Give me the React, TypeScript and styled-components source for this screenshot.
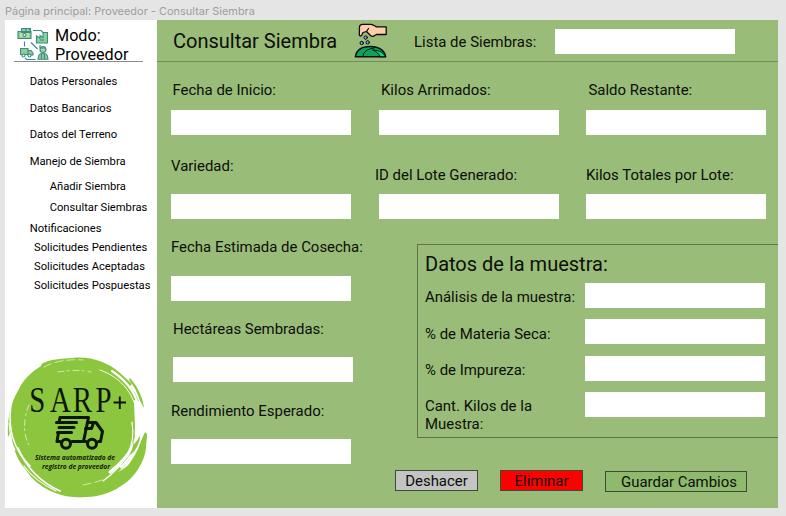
import React from "react";
import styled, { createGlobalStyle } from "styled-components";

const GlobalStyle = createGlobalStyle`
  * { box-sizing: border-box; }
  body {
    margin: 0;
    background: #e5e5e5;
    font-family: Roboto, "Liberation Sans", sans-serif;
    color: #0b0f08;
    overflow: hidden;
  }
`;

const Canvas = styled.div`
  width: 786px;
  height: 516px;
  display: flex;
  flex-direction: column;
  background: #e5e5e5;
`;

const FrameName = styled.div`
  height: 20px;
  padding: 4px 0 0 5px;
  font: 400 10.9px/14px Inter, sans-serif;
  letter-spacing: 0.04px;
  color: #9d9d9d;
  white-space: nowrap;
`;

const Board = styled.div`
  display: flex;
  width: 773px;
  height: 488px;
  margin-left: 5px;
`;

const Sidebar = styled.aside`
  width: 152px;
  height: 100%;
  display: flex;
  flex-direction: column;
  background: #fff;
`;

const Profile = styled.div`
  display: flex;
  height: 42px;
  width: 129px;
  margin-left: 9px;
  padding: 6px 0 0 3px;
  border-bottom: 1px solid #8c8c8c;
`;

const Mode = styled.div`
  margin-left: 5px;
  font-size: 16.2px;
  line-height: 19px;
  color: #000;
  white-space: nowrap;
`;

const NavItem = styled.a<{ $indent?: number; $height: number }>`
  height: ${(p) => p.$height}px;
  padding-left: ${(p) => 24.7 + (p.$indent ?? 0)}px;
  font-size: 11.2px;
  line-height: 14px;
  color: #000;
  white-space: nowrap;
`;

const Nav = styled.nav`
  display: flex;
  flex-direction: column;
  padding-top: 13px;
  flex: 1;
`;

const Logo = styled.svg`
  display: block;
  flex: none;
`;

const Main = styled.main`
  flex: 1;
  display: flex;
  flex-direction: column;
  background: #9abc79;
`;

const Header = styled.header`
  display: flex;
  height: 42px;
  border-bottom: 1px solid #708c58;
`;

const Title = styled.h1`
  width: 197px;
  margin: 0;
  padding: 9px 0 0 16px;
  font-size: 20px;
  font-weight: 400;
  line-height: 24px;
  white-space: nowrap;
`;

const HeaderLabel = styled.label`
  width: 141px;
  margin-left: 27px;
  padding-top: 13px;
  font-size: 14.95px;
  line-height: 18px;
  white-space: nowrap;
`;

const Input = styled.input`
  display: block;
  width: 180px;
  height: 25px;
  padding: 0 6px;
  border: 0;
  border-radius: 0;
  outline: 0;
  background: #fff;
`;

const HeaderInput = styled(Input)`
  margin-top: 9px;
`;

const Body = styled.div`
  display: flex;
  flex: 1;
  padding-left: 14px;
`;

const Column = styled.div`
  width: 208px;
`;

const LastColumn = styled.div`
  margin-left: -0.6px;
`;

const RightSide = styled.div`
  flex: 1;
  display: flex;
  flex-direction: column;
`;

const FieldPair = styled.div`
  display: flex;
  height: 182px;
`;

const FieldBox = styled.div<{ $height: number; $top: number; $indent?: number }>`
  display: flex;
  flex-direction: column;
  justify-content: space-between;
  height: ${(p) => p.$height}px;
  padding-top: ${(p) => p.$top}px;
  padding-left: ${(p) => p.$indent ?? 0}px;
`;

const FieldLabel = styled.label<{ $shift?: number }>`
  margin-left: ${(p) => p.$shift ?? 0}px;
  font-size: 14.95px;
  line-height: 18px;
  white-space: nowrap;
`;

const Sample = styled.section`
  height: 194px;
  margin-left: 38px;
  padding: 7px 0 0 7px;
  border: 1px solid #5c7547;
  border-right: 0;
`;

const SampleTitle = styled.h2`
  height: 31px;
  margin: 0;
  font-size: 20px;
  font-weight: 400;
  line-height: 24px;
`;

const SampleRow = styled.div`
  display: flex;
  height: 36.4px;
`;

const SampleLabel = styled.label`
  width: 160px;
  padding: 6.3px 30px 0 0;
  font-size: 14.95px;
  line-height: 17.5px;

  &.wide {
    padding-right: 0;
    white-space: nowrap;
  }
`;

const Actions = styled.div`
  display: flex;
  padding: 32px 0 0 16px;
`;

const Button = styled.button<{ $bg: string; $width: number; $gap?: number; $drop?: number; $push?: number }>`
  width: ${(p) => p.$width}px;
  height: 21px;
  margin: ${(p) => p.$drop ?? 0}px 0 0 ${(p) => p.$gap ?? 0}px;
  padding: 1px 0 0 ${(p) => p.$push ?? 0}px;
  border: 1px solid #3f4a38;
  border-radius: 0;
  background: ${(p) => p.$bg};
  color: #0b0f08;
  font: 400 14.95px/18px Roboto, sans-serif;
  white-space: nowrap;
`;

const SowIcon = styled.svg`
  display: block;
  flex: none;
  margin-top: 2px;
`;

function SupplyChainIcon() {
  return (
    <svg width="33" height="34" viewBox="0 0 33 34" fill="none" stroke="#3b8a8a" strokeWidth="1.1">
      <path d="M4.500 2.500h9v4h-9zM1 5.500h13v7H1z" fill="#8fcf91" />
      <path d="M3 7h9v4H3z" fill="#b9e3a5" stroke="none" />
      <circle cx="7.500" cy="9" r="1.500" fill="#e8f6d5" />
      <path d="M9 2.500v3M14 3.500h-2" />
      <path d="M16 4.500h8l2 2" />
      <path d="M19.500 17v-7l3.500 2V9.500l3 2V6.500h4.500V17z" fill="#8fcf91" />
      <path d="M23 14h4" />
      <path d="M7.500 15.500v5M14 16.500l6.500 6.500M23 19v3" />
      <path d="M3.500 22.500h7.500v6H3.500zM11 24.500h3l2 2.500v2h-5z" fill="#8fcf91" />
      <circle cx="6.500" cy="29.500" r="1.500" fill="#fff" />
      <circle cx="12.500" cy="29.500" r="1.500" fill="#fff" />
      <path d="M8 32l2 1.500h8.500" />
      <circle cx="26" cy="23.500" r="3" fill="#a9d8a0" />
      <path d="M23 22h6" />
      <path d="M21 33.300c0-4 2-6 5-6s5 2 5 6z" fill="#8fcf91" />
      <path d="M24.500 28v5M27.500 28v5" />
    </svg>
  );
}

function SowingIcon() {
  return (
    <SowIcon width="33" height="36" viewBox="0 0 33 36" stroke="#0b0b0b" strokeWidth="1.400" strokeLinejoin="round" strokeLinecap="round">
      <path
        d="M5.500 4.500Q6 2.300 8.500 2.300h8q2 0 3.500 1.200l2.500 1.400h9.700v7.600h-9.700l-3 1.600q-1.500.6-3-.6L12.500 9.500 9 10.500l-1.500 3q-1.800 1.200-2.200-.6z"
        fill="#ffcdab"
        strokeWidth="1.300"
      />
      <path d="M14.500 6.500L12.500 9.500" fill="none" strokeWidth="1.200" />
      <g fill="#7aa0e6" strokeWidth="1">
        <circle cx="11.700" cy="15.500" r="1.700" />
        <circle cx="7.700" cy="21" r="1.700" />
        <circle cx="13.700" cy="20.400" r="1.700" />
      </g>
      <path d="M1.300 34.800c1-6 6-10.300 15-10.300s14.500 4.300 15.400 10.300z" fill="#0aa35c" />
      <path d="M19 28c7 .5 10.800 3 12.500 6.800h-5.500c-1-3-3.500-5.300-7-6.800z" fill="#08d987" strokeWidth="1" />
      <path d="M9 34.500c0-4.500 4-7.500 11-8.500" fill="none" strokeWidth="1" />
    </SowIcon>
  );
}

function SarpLogo() {
  return (
    <Logo width="152" height="158" viewBox="5 350 152 158">
      <g fill="#8cc63e">
        <path d="M77 357.500C94 357 109 363 120 373l12 11-2 2c8 10 13 24 12 31l-5-11c5 24 1 45-12 59l-7 7c12-6 21-16 26-31l1-4c5 16-7 39-24 49-14 10-31 12-47 11-19-1-39-12-48-27-11-12-14-27-15-38l-3 5C7 418 11 402 18 391c4-10 13-19 23-25-1-3 9-6 18-7z" />
        <path d="M130 378c8 9 13 20 14 30l-4-7c-2-8-6-15-11-21z" />
        <path d="M145 432l2 2c0 13-4 24-10 31-9 13-20 20-32 24 16-13 30-29 36-48z" />
      </g>
      <g fill="none" stroke="#fff" strokeLinecap="round">
        <path d="M12 399c-5 25 0 49 18 67" strokeWidth="1.500" />
        <path d="M18 448c8 19 22 34 42 43" strokeWidth="1.800" />
        <path d="M24 466c8 11 19 19 32 25M9 423l2 18 4 9" strokeWidth="1.100" />
        <path d="M100 370c26 9 39 31 38 58" strokeWidth=".9" />
        <path d="M112 371c15 10 26 25 28 43" strokeWidth="2.200" />
        <path d="M139 414c2 24-9 43-29 58" strokeWidth="3" />
        <path d="M132 422c4 24-6 42-29 59" strokeWidth="1.200" />
        <path d="M142 427c-4 18-11 31-21 40" strokeWidth="2.500" />
        <path d="M58 372c12-2 24-2 33 0M29 405c-6 14-6 29 0 40" strokeWidth=".6" strokeDasharray="6 3 2 4" />
        <path d="M44 367c11-6 24-8 39-7M83 485c10-2 19-4 27-9" strokeWidth=".6" strokeDasharray="8 4" />
      </g>
      <path d="M134 400l7 2 3 26-5 16-5 6 1-22z" fill="#fff" />
      <path d="M134 431c1 9-1 18-5 25 5-3 11-12 11-20l-1 1c-2 4-4 6-6 8z" fill="#8cc63e" />
      <text
        transform="translate(0 412) scale(.8 1)"
        x="36.500 62.500 91 119.500"
        y="0"
        fontFamily="Liberation Serif, serif"
        fontSize="36"
        fill="#0c1604"
      >
        SARP
      </text>
      <path d="M119.800 396.500v12.500M113.500 402.500h12.500" stroke="#0c1604" strokeWidth="1.900" />
      <g fill="none" stroke="#0c1604" strokeWidth="3" strokeLinejoin="round" strokeLinecap="round">
        <path d="M60 417.500h28.500l-5 24H72M60 441.500h-3l1.500-9M60 417.500l-.8 4M56.500 422.500h20M59 427.500h15M57.500 432.500h14" />
        <path d="M88 422.500h8l6.500 9-2 10h-2M86 441.500h-3M85.500 428.500h6l1.800-5" />
        <circle cx="66" cy="443.800" r="4.500" />
        <circle cx="92" cy="443.800" r="4.500" />
      </g>
      <g fontFamily="Open Sans, sans-serif" fontSize="6.400" fontWeight="700" fontStyle="italic" fill="#13200a">
        <text x="35" y="459.600" textLength="80" lengthAdjust="spacingAndGlyphs">Sistema automatizado de</text>
        <text x="42" y="468.600" textLength="68" lengthAdjust="spacingAndGlyphs">registro de proveedor</text>
      </g>
    </Logo>
  );
}

const navItems = [
  { text: "Datos Personales", height: 26.5 },
  { text: "Datos Bancarios", height: 26.5 },
  { text: "Datos del Terreno", height: 27 },
  { text: "Manejo de Siembra", height: 25 },
  { text: "Añadir Siembra", height: 21.4, indent: 20 },
  { text: "Consultar Siembras", height: 20.6, indent: 20 },
  { text: "Notificaciones", height: 19 },
  { text: "Solicitudes Pendientes", height: 19, indent: 4.3 },
  { text: "Solicitudes Aceptadas", height: 19, indent: 4.3 },
  { text: "Solicitudes Pospuestas", height: 19, indent: 4.3 },
];

type FieldProps = { label: string; height: number; top: number; indent?: number; shift?: number };

function Field({ label, height, top, indent, shift }: FieldProps) {
  return (
    <FieldBox $height={height} $top={top} $indent={indent}>
      <FieldLabel $shift={shift}>{label}</FieldLabel>
      <Input aria-label={label} />
    </FieldBox>
  );
}

export default function App() {
  return (
    <>
      <GlobalStyle />
      <Canvas>
        <FrameName>Página principal: Proveedor - Consultar Siembra</FrameName>
        <Board>
          <Sidebar>
            <Profile>
              <SupplyChainIcon />
              <Mode>
                Modo:
                <br />
                Proveedor
              </Mode>
            </Profile>
            <Nav>
              {navItems.map((item) => (
                <NavItem key={item.text} $height={item.height} $indent={item.indent}>
                  {item.text}
                </NavItem>
              ))}
            </Nav>
            <SarpLogo />
          </Sidebar>
          <Main>
            <Header>
              <Title>Consultar Siembra</Title>
              <SowingIcon />
              <HeaderLabel>Lista de Siembras:</HeaderLabel>
              <HeaderInput aria-label="Lista de Siembras" />
            </Header>
            <Body>
              <Column>
                <Field label="Fecha de Inicio:" height={73} top={19} shift={1.5} />
                <Field label="Variedad:" height={84} top={22} />
                <Field label="Fecha Estimada de Cosecha:" height={82} top={19} />
                <Field label="Hectáreas Sembradas:" height={81} top={19} indent={2} />
                <Field label="Rendimiento Esperado:" height={82} top={20} />
              </Column>
              <RightSide>
                <FieldPair>
                  <Column>
                    <Field label="Kilos Arrimados:" height={73} top={19} shift={2} />
                    <Field label="ID del Lote Generado:" height={84} top={31} shift={-4} />
                  </Column>
                  <LastColumn>
                    <Field label="Saldo Restante:" height={73} top={19} shift={2} />
                    <Field label="Kilos Totales por Lote:" height={84} top={31} shift={-0.5} />
                  </LastColumn>
                </FieldPair>
                <Sample>
                  <SampleTitle>Datos de la muestra:</SampleTitle>
                  <SampleRow>
                    <SampleLabel className="wide">Análisis de la muestra:</SampleLabel>
                    <Input />
                  </SampleRow>
                  <SampleRow>
                    <SampleLabel>% de Materia Seca:</SampleLabel>
                    <Input />
                  </SampleRow>
                  <SampleRow>
                    <SampleLabel>% de Impureza:</SampleLabel>
                    <Input />
                  </SampleRow>
                  <SampleRow>
                    <SampleLabel>Cant. Kilos de la Muestra:</SampleLabel>
                    <Input />
                  </SampleRow>
                </Sample>
                <Actions>
                  <Button $bg="#c4c4c4" $width={83}>Deshacer</Button>
                  <Button $bg="#ff0000" $width={83} $gap={22}>Eliminar</Button>
                  <Button $bg="#8fb96d" $width={142} $gap={22} $drop={1} $push={6}>Guardar Cambios</Button>
                </Actions>
              </RightSide>
            </Body>
          </Main>
        </Board>
      </Canvas>
    </>
  );
}
